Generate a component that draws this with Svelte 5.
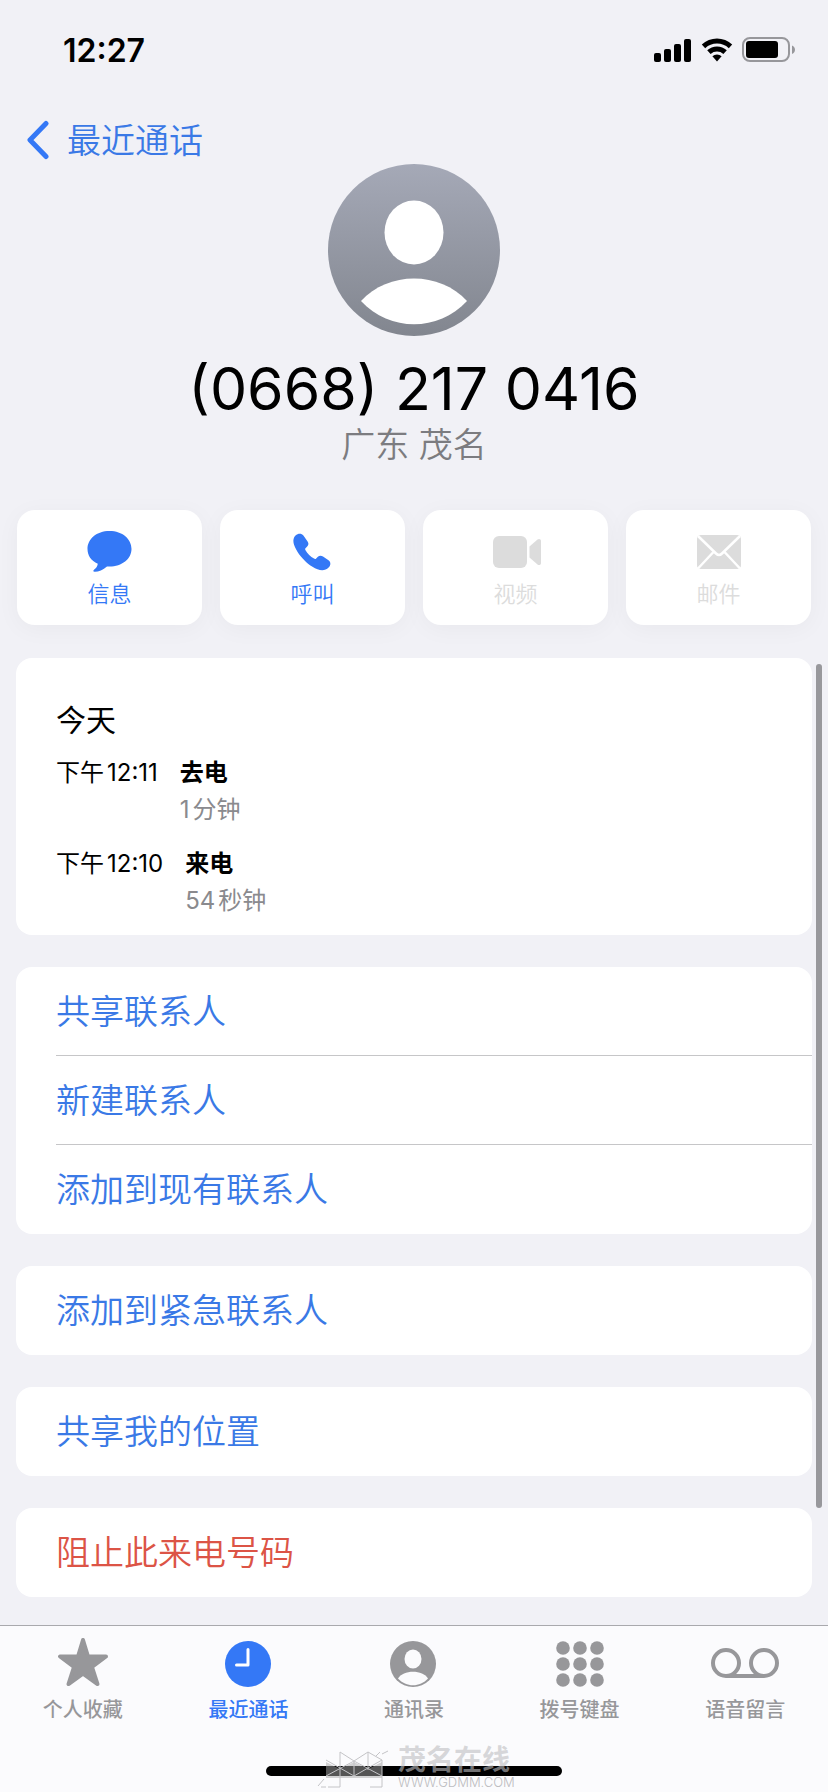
<script>
  const actions = [
    { label: '信息', icon: 'message', enabled: true },
    { label: '呼叫', icon: 'phone', enabled: true },
    { label: '视频', icon: 'video', enabled: false },
    { label: '邮件', icon: 'mail', enabled: false }
  ];

  const calls = [
    { time: '下午12:11', type: '去电', length: '1分钟' },
    { time: '下午12:10', type: '来电', length: '54秒钟' }
  ];

  const groups = [
    ['共享联系人', '新建联系人', '添加到现有联系人'],
    ['添加到紧急联系人'],
    ['共享我的位置']
  ];

  const tabs = [
    { label: '个人收藏', icon: 'star' },
    { label: '最近通话', icon: 'clock' },
    { label: '通讯录', icon: 'contact' },
    { label: '拨号键盘', icon: 'keypad' },
    { label: '语音留言', icon: 'voicemail' }
  ];

  const dots = [7, 24, 41];

  let activeTab = '最近通话';
</script>

<div class="phone">
  <header class="status">
    <span class="clock">12:27</span>
    <div class="indicators">
      <svg width="38" height="24" viewBox="0 0 38 24">
        <rect x="0" y="15" width="7" height="9" rx="2" />
        <rect x="10" y="11" width="7" height="13" rx="2" />
        <rect x="20" y="6" width="7" height="18" rx="2" />
        <rect x="30" y="1" width="7" height="23" rx="2" />
      </svg>
      <svg width="32" height="24" viewBox="0 0 32 24">
        <path d="M0.8 6.6 A22 22 0 0 1 31.2 6.6 L27.8 10.2 A17.5 17.5 0 0 0 4.2 10.2 Z" />
        <path d="M6.2 12.3 A14.2 14.2 0 0 1 25.8 12.3 L22.4 15.9 A9.8 9.8 0 0 0 9.6 15.9 Z" />
        <path d="M11.4 18.2 A6.8 6.8 0 0 1 20.6 18.2 L16 23.4 Z" />
      </svg>
      <svg width="54" height="26" viewBox="0 0 54 26">
        <rect x="1" y="1" width="46" height="23" rx="7" fill="none" stroke="#97979b" stroke-width="2" />
        <rect x="4" y="4" width="32" height="17" rx="3" />
        <path d="M50 8.5 C54 10 54 15.5 50 17 Z" fill="#97979b" />
      </svg>
    </div>
  </header>

  <nav class="top">
    <a class="back" href="#recents">
      <svg width="24" height="40" viewBox="0 0 24 40">
        <path d="M20 3.5 L4 20 L20 36.5" fill="none" stroke="#3478f6" stroke-width="5" stroke-linecap="round" stroke-linejoin="round" />
      </svg>
      <span>最近通话</span>
    </a>
  </nav>

  <section class="profile">
    <svg width="172" height="172" viewBox="0 0 172 172">
      <defs>
        <linearGradient id="avatar" x1="0" y1="0" x2="0" y2="1">
          <stop offset="0" stop-color="#a5a9b7" />
          <stop offset="1" stop-color="#82868f" />
        </linearGradient>
      </defs>
      <circle cx="86" cy="86" r="86" fill="url(#avatar)" />
      <ellipse cx="86" cy="68.5" rx="29.5" ry="32" fill="#fff" />
      <path d="M33 137 C60 107 112 107 139 137 C110 168 62 168 33 137 Z" fill="#fff" />
    </svg>
    <h1>(0668) 217 0416</h1>
    <p>广东 茂名</p>
  </section>

  <section class="actions">
    {#each actions as action}
      <button class="action" disabled={!action.enabled}>
        <svg width="50" height="46" viewBox="0 0 50 46" fill="currentColor">
          {#if action.icon === 'message'}
            <path d="M24.5 2 C37.5 2 46.5 10 46.5 20 C46.5 30 37 37.5 24.5 37.5 L22 37.5 C18 41 13 43 9.5 42.8 C8 42.7 8 41.5 9 40.7 C11 39.3 12.5 37.5 12.8 34.8 C6 31.7 2.5 26.5 2.5 20 C2.5 10 11.5 2 24.5 2 Z" />
          {:else if action.icon === 'phone'}
            <path transform="translate(-1 -1)" d="M8.5 7.5 C11 5.2 14.5 5 16.4 7.6 L20.6 13.4 C22 15.4 21.5 17.2 20 18.7 L18.7 20 C18 20.7 18 21.3 18.5 22.2 C20.5 25.5 23.5 28.6 27 30.6 C27.9 31.1 28.5 31.1 29.2 30.4 L30.6 29 C32.2 27.5 34 27.2 36 28.5 L41.5 32.3 C44 34.2 44 37.3 41.6 39.6 C37.5 43.6 31.5 42.6 25.5 38.8 C20 35.3 14.3 29.6 10.6 23.9 C6.7 17.8 4.5 11.5 8.5 7.5 Z" />
          {:else if action.icon === 'video'}
            <rect x="2" y="7" width="34" height="32" rx="6" />
            <path d="M38.5 17.5 L46.5 10.5 C48 9.3 50 10 50 12 V34 C50 36 48 36.7 46.5 35.5 L38.5 28.5 Z" />
          {:else}
            <rect x="3" y="6" width="44" height="34" rx="4" />
            <path d="M4 7 L22 24.5 C24 26.5 26 26.5 28 24.5 L46 7 M4 39.5 L19 23.5 M46 39.5 L31 23.5" fill="none" stroke="#fff" stroke-width="2.5" />
          {/if}
        </svg>
        <span>{action.label}</span>
      </button>
    {/each}
  </section>

  <main class="list">
    <section class="card history">
      <h2>今天</h2>
      {#each calls as call}
        <div class="call">
          <span>{call.time}</span>
          <div>
            <strong>{call.type}</strong>
            <small>{call.length}</small>
          </div>
        </div>
      {/each}
    </section>

    {#each groups as group}
      <section class="card">
        {#each group as item}
          <button class="row">{item}</button>
        {/each}
      </section>
    {/each}

    <section class="card">
      <button class="row danger">阻止此来电号码</button>
    </section>

    <div class="scrollbar"></div>
  </main>

  <footer class="bottom">
    <nav class="tabs">
      {#each tabs as tab}
        <button class="tab" class:active={tab.label === activeTab} on:click={() => (activeTab = tab.label)}>
          <svg width="70" height="52" viewBox="0 0 70 52" fill="currentColor">
            {#if tab.icon === 'star'}
              <path d="M35 4 L40 20.5 H58 L44 31 L49.5 48 L35 37.6 L20.5 48 L26 31 L12 20.5 H30 Z" stroke="currentColor" stroke-width="4" stroke-linejoin="round" />
            {:else if tab.icon === 'clock'}
              <circle cx="35" cy="28" r="23" />
              <path d="M35 13.5 V29 H23.5" fill="none" stroke="#fff" stroke-width="3" stroke-linecap="round" stroke-linejoin="round" />
            {:else if tab.icon === 'contact'}
              <circle cx="34" cy="28" r="23" />
              <ellipse cx="34" cy="23" rx="8.5" ry="9.5" fill="#fbfbfd" />
              <path d="M19 42.5 C24 33.5 44 33.5 49 42.5 C41 51.5 27 51.5 19 42.5 Z" fill="#fbfbfd" />
            {:else if tab.icon === 'keypad'}
              {#each dots as x}
                {#each dots as y}
                  <circle cx={x + 11} cy={y * 0.94 + 5.4} r="6.8" />
                {/each}
              {/each}
            {:else}
              <g fill="none" stroke="currentColor" stroke-width="4">
                <circle cx="16" cy="27" r="13" />
                <circle cx="54" cy="27" r="13" />
                <path d="M16 40 H54" />
              </g>
            {/if}
          </svg>
          <span>{tab.label}</span>
        </button>
      {/each}
    </nav>
    <div class="home">
      <div class="watermark">
        <svg width="76" height="40" viewBox="0 0 76 40">
          <path d="M10 12 L24 19 L38 12 L52 19 L66 12 V28 H10 Z" fill="#aaa" fill-opacity="0.5" />
          <path d="M10 10 L38 26 V11 L10 26 M38 11 L66 26 M38 26 L66 10 M24 2 V37 H12 M52 2 V20 M66 10 V37 H54 M24 2 L38 11 L52 2 L66 10 M60 6 L64 2 M66 4 L72 1 M2 36 L8 29 M5 37 H10" fill="none" stroke="#c4c4c7" />
        </svg>
        <div class="mark-text">
          <b>茂名在线</b>
          <i>WWW.GDMM.COM</i>
        </div>
      </div>
    </div>
  </footer>
</div>

<style>
  :global(body) {
    margin: 0;
    background: #f1f1f6;
  }

  .phone {
    display: flex;
    flex-direction: column;
    min-height: 100vh;
    font-family: Inter, "Noto Sans CJK SC", sans-serif;
    font-weight: 350;
    color: #000;
    text-autospace: normal;
  }

  button {
    margin: 0;
    padding: 0;
    border: 0;
    background: none;
    font: inherit;
    color: #3478f6;
  }

  h1, h2, p {
    margin: 0;
    font-weight: 400;
  }

  svg {
    display: block;
    flex: none;
  }

  .status {
    display: flex;
    align-items: center;
    justify-content: space-between;
    height: 100px;
    padding: 0 32px 0 63px;
  }

  .clock {
    font-size: 32px;
    font-weight: 600;
  }

  .indicators {
    display: flex;
    align-items: center;
    gap: 9px;
  }

  .top {
    display: flex;
    height: 64px;
    padding-left: 26px;
  }

  .back {
    display: flex;
    align-items: center;
    gap: 17px;
    height: 80px;
    font-size: 34px;
    color: #3a79e6;
    text-decoration: none;
  }

  .back span {
    padding-bottom: 3px;
  }

  .profile {
    display: flex;
    flex-direction: column;
    align-items: center;
  }

  h1 {
    margin-top: 16px;
    font-size: 59px;
    line-height: 73px;
  }

  .profile p {
    font-size: 34px;
    font-weight: 350;
    line-height: 40px;
    color: #7c7c80;
  }

  .actions {
    display: grid;
    grid-template-columns: repeat(4, 1fr);
    gap: 18px;
    padding: 45px 17px 33px;
  }

  .action {
    display: flex;
    flex-direction: column;
    align-items: center;
    gap: 4px;
    height: 115px;
    padding-top: 19px;
    border-radius: 18px;
    background: #fff;
    box-shadow: 0 4px 24px rgba(0, 0, 0, 0.04);
    font-size: 22px;
    line-height: 30px;
  }

  .action:disabled {
    color: #dcdcdc;
  }

  .list {
    position: relative;
    display: flex;
    flex-direction: column;
    flex: 1;
    gap: 32px;
    padding: 0 16px 28px;
  }

  .card {
    border-radius: 16px;
    background: #fff;
    overflow: hidden;
  }

  .history {
    padding: 42px 40px 16px;
  }

  h2 {
    margin-bottom: 14px;
    font-size: 30px;
    line-height: 40px;
  }

  .call {
    display: flex;
    gap: 22px;
    font-size: 24px;
    font-weight: 400;
    line-height: 37px;
  }

  .call + .call {
    margin-top: 17px;
  }

  .call strong, .call small {
    display: block;
    font-size: 24px;
  }

  .call small {
    color: #8a8a8e;
  }

  .row {
    display: block;
    width: 100%;
    height: 89px;
    padding: 0 0 4px 40px;
    font-size: 34px;
    color: #3a79e6;
    text-align: left;
  }

  .row:not(:last-child) {
    background: linear-gradient(#c6c6c8, #c6c6c8) 40px 100% / 100% 1px no-repeat;
  }

  .danger {
    color: #dc5446;
  }

  .scrollbar {
    position: absolute;
    top: 6px;
    right: 6px;
    bottom: 117px;
    width: 6px;
    border-radius: 3px;
    background: #98989c;
  }

  .bottom {
    border-top: 1px solid #a9a9ad;
    background: #fbfbfd;
  }

  .tabs {
    display: grid;
    grid-template-columns: repeat(5, 1fr);
    padding-top: 10px;
  }

  .tab {
    display: flex;
    flex-direction: column;
    align-items: center;
    gap: 7px;
    font-size: 20px;
    font-weight: 500;
    line-height: 30px;
    color: #97979a;
  }

  .active {
    color: #3478f6;
  }

  .home {
    position: relative;
    width: 296px;
    height: 10px;
    margin: 41px auto 16px;
    border-radius: 5px;
    background: #000;
  }

  .watermark {
    position: absolute;
    left: 50px;
    bottom: -14px;
    display: flex;
    align-items: flex-end;
    gap: 6px;
    color: rgba(190, 190, 193, 0.6);
  }

  .mark-text {
    display: flex;
    flex-direction: column;
  }

  .watermark b {
    font-size: 28px;
    font-weight: 700;
    line-height: 28px;
  }

  .watermark i {
    font-size: 13px;
    font-style: normal;
    line-height: 16px;
    color: #bcbcc0;
  }
</style>
